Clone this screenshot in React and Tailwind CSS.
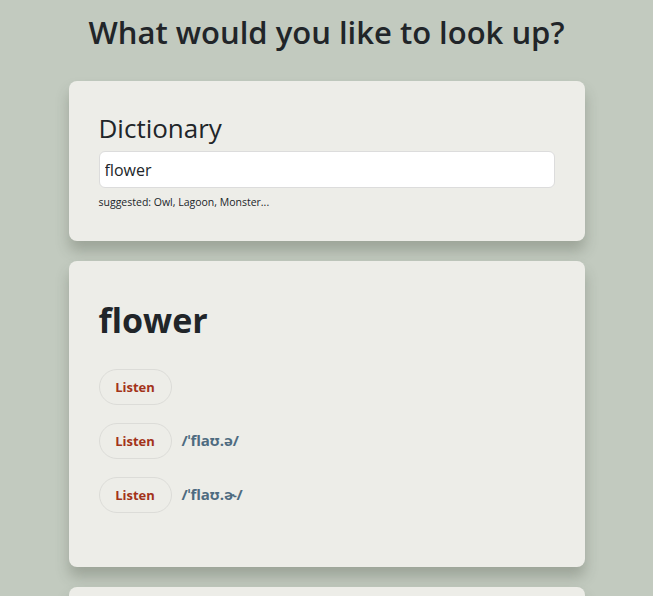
import { useState } from "react";

const phonetics = [
    { text: "" },
    { text: "/ˈflaʊ.ə/" },
    { text: "/ˈflaʊ.ɚ/" },
];

export default function App() {
    const [word, setWord] = useState("flower");

    return (
        <div
            className="min-h-screen bg-[#c2cabf] text-[#212529] pb-10"
            style={{ fontFamily: '"Open Sans", "Noto Sans", sans-serif' }}
        >
            <h1 className="text-center text-[31px] font-semibold leading-none pt-[17px] pb-[33px]">
                What would you like to look up?
            </h1>
            <div className="w-[516px] mx-auto flex flex-col gap-[20px]">
                <section className="bg-[#edede8] rounded-lg shadow-[0_10px_14px_rgba(60,70,55,0.28)] px-[30px] pt-[32px] pb-[33px]">
                    <h2 className="text-[26px] leading-[30px] mb-[8px]">
                        Dictionary
                    </h2>
                    <input
                        type="search"
                        value={word}
                        onChange={(e) => setWord(e.target.value)}
                        className="w-full h-[37px] bg-white border border-[#dcdcdc] rounded-md px-[5px] text-[16px] outline-none"
                    />
                    <p className="text-[10.5px] mt-[9px] leading-none">
                        suggested: Owl, Lagoon, Monster...
                    </p>
                </section>
                <section className="bg-[#edede8] rounded-lg shadow-[0_10px_14px_rgba(60,70,55,0.28)] px-[30px] pt-[42px] pb-[54px]">
                    <h1 className="text-[34px] font-bold leading-none mb-[32px]">
                        {word}
                    </h1>
                    <div className="flex flex-col gap-[18px]">
                        {phonetics.map((p, i) => (
                            <div key={i} className="flex items-center gap-[10px]">
                                <button className="w-[73px] h-[36px] pt-[2px] rounded-full border border-[#dcdcd8] text-[#a3331a] text-[13px] font-bold">
                                    Listen
                                </button>
                                {p.text && (
                                    <span className="text-[15px] font-bold text-[#4e6b80]">
                                        {p.text}
                                    </span>
                                )}
                            </div>
                        ))}
                    </div>
                </section>
                <section className="bg-[#edede8] rounded-lg shadow-[0_10px_14px_rgba(60,70,55,0.28)] h-[200px]" />
            </div>
        </div>
    );
}
